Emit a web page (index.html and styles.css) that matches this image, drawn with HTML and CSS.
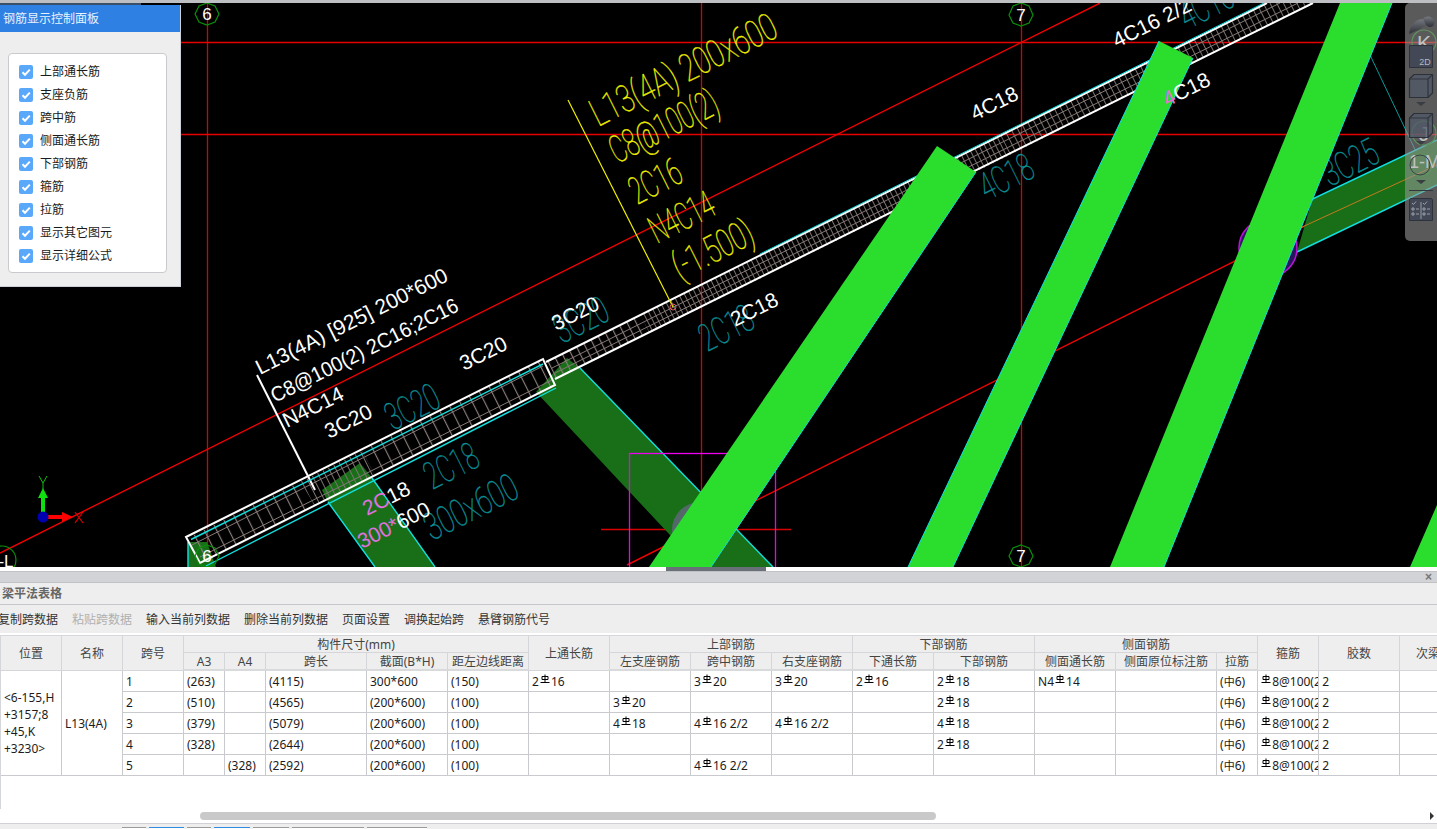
FILE: index.html
```html
<!DOCTYPE html>
<html lang="zh-CN">
<head>
<meta charset="utf-8">
<title>梁平法表格</title>
<link rel="stylesheet" href="styles.css">
</head>
<body>
<svg width="0" height="0" class="defs" aria-hidden="true">
  <defs>
    <symbol id="rb" viewBox="0 0 10 10">
      <path d="M5 0.5V8.5M2 2.5H8V5.5H2ZM0.5 8.5H9.5" fill="none" stroke="#000" stroke-width="1"/>
    </symbol>
  </defs>
</svg>
<div class="topbar"></div>
<main class="canvas">
  <svg class="cad" viewBox="0 3 1437 564" width="1437" height="564">
    <defs>
      <pattern id="p11" width="11" height="80" patternUnits="userSpaceOnUse" patternTransform="rotate(-26.57)"><path d="M.5 0V80" stroke="#8a7e7a" stroke-width="1.3"/></pattern>
      <pattern id="p8" width="8" height="80" patternUnits="userSpaceOnUse" patternTransform="rotate(-26.57)"><path d="M.5 0V80" stroke="#8a7e7a" stroke-width="1.3"/></pattern>
      <pattern id="p6" width="6" height="80" patternUnits="userSpaceOnUse" patternTransform="rotate(-26.57)"><path d="M.5 0V80" stroke="#7d7270" stroke-width="1"/></pattern>
      <pattern id="p5" width="5" height="80" patternUnits="userSpaceOnUse" patternTransform="rotate(-26.57)"><path d="M.5 0V80" stroke="#7d7270" stroke-width="1"/></pattern>
    </defs>

    <g class="red">
      <path d="M207.500 3V567M701.500 3V567M1021.500 3V567"/>
      <path class="redh" d="M181 42.500H1437M181 134.500H1437"/>
      <path class="redb" d="M0 553L1100 3M627 565L1437 160"/>
      <path d="M601 529.500H791"/>
    </g>

    <path class="cy" d="M1370 55L1420 160"/>

    <!-- dark members -->
    <g class="dk">
      <polygon points="188,542 207,542 216,567 188,567"/>
      <polygon points="322,490 360,463 372,478 435,567 375,567 328,502"/>
      <polygon points="536,392 567,358 580,368 773,567 700,567"/>
      <polygon points="1312,200 1437,140 1437,185 1297,252"/>
    </g>
    <path class="cyb" d="M188 567V542M328 502L375 567M372 478L435 567M580 368L773 567M1300 205L1437 140M1297 252L1437 185"/>
    <path class="or" d="M1300 228L1437 165"/>

    <rect class="mg" x="629.500" y="453.500" width="146" height="120"/>
    <circle class="gc" cx="700" cy="530" r="28"/>
    <circle class="mgc" cx="1268" cy="248" r="29"/>

    <!-- beam mesh -->
    <polygon fill="url(#p11)" points="188,538 300,482 315,505 205,561"/>
    <polygon fill="url(#p6)" points="300,482 362,451 375,476 315,505"/>
    <polygon fill="url(#p11)" points="362,451 543,359 555,385 375,476"/>
    <polygon fill="url(#p8)" points="546,362 640,315 650,333 555,378"/>
    <polygon fill="url(#p5)" points="640,315 1000,135 1010,155 650,333"/>
    <polygon fill="url(#p6)" points="1000,135 1267,3 1313,3 1010,155"/>
    <path class="mesh" d="M192 545L543 366M200 557L552 380M552 368L1280 3M555 373L1298 3"/>

    <g class="wl">
      <path d="M186 537L543 359L555 385L200 563Z"/>
      <path d="M546 362L1267 3M555 379L1313 3"/>
      <path d="M257 375L315 490"/>
    </g>
    <path class="cyb" d="M191 539.500L543 364M206 566L556 388"/>
    <path class="cyb thin" d="M760 254L1264 3"/>

    <!-- teal annotation -->
    <g class="tl">
      <text transform="translate(393 431) rotate(-26.57)" textLength="56" lengthAdjust="spacingAndGlyphs">3C20</text>
      <text transform="translate(432 490) rotate(-26.57)" textLength="56" lengthAdjust="spacingAndGlyphs">2C18</text>
      <text transform="translate(432 541) rotate(-26.57)" textLength="100" lengthAdjust="spacingAndGlyphs">300x600</text>
      <text transform="translate(562 344) rotate(-26.57)" textLength="56" lengthAdjust="spacingAndGlyphs">3C20</text>
      <text transform="translate(707 352) rotate(-26.57)" textLength="56" lengthAdjust="spacingAndGlyphs">2C18</text>
      <text transform="translate(987 201) rotate(-26.57)" textLength="56" lengthAdjust="spacingAndGlyphs">4C18</text>
      <text transform="translate(1187 30) rotate(-26.57)" textLength="56" lengthAdjust="spacingAndGlyphs">4C16</text>
      <text transform="translate(1330 187) rotate(-26.57)" textLength="58" lengthAdjust="spacingAndGlyphs">3C25</text>
    </g>

    <!-- yellow annotation -->
    <path class="yl" d="M568 100L673 307"/>
    <circle class="rd" cx="673" cy="307" r="3"/>
    <g class="yt">
      <text transform="translate(598 127) rotate(-26.57)" textLength="204" lengthAdjust="spacingAndGlyphs">L13(4A) 200x600</text>
      <text transform="translate(617 164) rotate(-26.57)" textLength="117" lengthAdjust="spacingAndGlyphs">C8@100(2)</text>
      <text transform="translate(637 205) rotate(-26.57)" textLength="54" lengthAdjust="spacingAndGlyphs">2C16</text>
      <text transform="translate(657 244) rotate(-26.57)" textLength="68" lengthAdjust="spacingAndGlyphs">N4C14</text>
      <text transform="translate(680 280) rotate(-26.57)" textLength="86" lengthAdjust="spacingAndGlyphs">(-1.500)</text>
    </g>

    <!-- bright members -->
    <g class="gr">
      <polygon points="937,146 976,172 711,567 649,567"/>
      <polygon points="1159,41 1193,58 953,567 908,567"/>
      <polygon points="1340,3 1392,3 1164,567 1110,567"/>
      <polygon points="1437,505 1437,567 1410,567"/>
    </g>
    <path class="cyb thin" d="M976 172L711 567M1159 41L908 567M1193 58L953 567M1392 3L1164 567"/>

    <!-- white annotation -->
    <g class="wt">
      <text transform="translate(260 375) rotate(-26.57)" textLength="212" lengthAdjust="spacingAndGlyphs">L13(4A) [925] 200*600</text>
      <text transform="translate(275 403) rotate(-26.57)" textLength="207" lengthAdjust="spacingAndGlyphs">C8@100(2) 2C16;2C16</text>
      <text transform="translate(287 428) rotate(-26.57)">N4C14</text>
      <text transform="translate(329 439) rotate(-26.57)">3C20</text>
      <text transform="translate(464 371) rotate(-26.57)">3C20</text>
      <text transform="translate(556 331) rotate(-26.57)">3C20</text>
      <text transform="translate(735 327) rotate(-26.57)">2C18</text>
      <text transform="translate(975 121) rotate(-26.57)">4C18</text>
      <text transform="translate(1117 48) rotate(-26.57)">4C16 2/2</text>
      <text transform="translate(1167 107) rotate(-26.57)"><tspan class="pk">4</tspan>C18</text>
      <text transform="translate(367 516) rotate(-26.57)"><tspan class="pk">2C</tspan>18</text>
      <text transform="translate(362 549) rotate(-26.57)"><tspan class="pk">300*</tspan>600</text>
    </g>

    <!-- grid bubbles -->
    <g class="bub">
      <polygon points="207,3 215,6 219,14 215,22 207,25 199,22 195,14 199,6"/>
      <polygon points="1021,3 1029,6 1033,15 1029,23 1021,26 1013,23 1009,15 1013,6"/>
      <polygon points="207,545 215,548 219,556 215,564 207,567 199,564 195,556 199,548"/>
      <polygon points="1021,545 1029,548 1033,556 1029,564 1021,567 1013,564 1009,556 1013,548"/>
      <circle cx="2" cy="560" r="14"/>
      <circle cx="1424" cy="42" r="12"/>
      <circle cx="1424" cy="133" r="12"/>
      <circle cx="1421" cy="165" r="11"/>
    </g>
    <g class="lb">
      <text x="207" y="20">6</text>
      <text x="1021" y="21">7</text>
      <text x="207" y="562">6</text>
      <text x="1021" y="562">7</text>
      <text x="6" y="567">-L</text>
      <text class="big" x="1424" y="50">K</text>
      <text class="big" x="1424" y="141">J</text>
      <text class="mid" x="1409" y="168">1-M</text>
    </g>

    <!-- axis -->
    <g class="axis">
      <path class="ag" d="M41 513V498H38L43 488L48 498H45V513Z"/>
      <path class="ar" d="M48 515H62V512L73 517L62 522V519H48Z"/>
      <circle class="ab" cx="43" cy="517" r="5.500"/>
      <path class="ayt" d="M39 476L43 483L47 476M43 483V489"/>
      <path class="axt" d="M75 512L83 523M83 512L75 523"/>
    </g>
  </svg>

  <span class="edge"></span>
  <section class="rebar-panel">
    <h2 class="rebar-title">钢筋显示控制面板</h2>
    <div class="rebar-body">
      <ul class="rebar-list">
        <li><span class="cb"><svg viewBox="0 0 14 14"><path d="M3.500 7.200L6 9.700L10.800 4.600"/></svg></span>上部通长筋</li>
        <li><span class="cb"><svg viewBox="0 0 14 14"><path d="M3.500 7.200L6 9.700L10.800 4.600"/></svg></span>支座负筋</li>
        <li><span class="cb"><svg viewBox="0 0 14 14"><path d="M3.500 7.200L6 9.700L10.800 4.600"/></svg></span>跨中筋</li>
        <li><span class="cb"><svg viewBox="0 0 14 14"><path d="M3.500 7.200L6 9.700L10.800 4.600"/></svg></span>侧面通长筋</li>
        <li><span class="cb"><svg viewBox="0 0 14 14"><path d="M3.500 7.200L6 9.700L10.800 4.600"/></svg></span>下部钢筋</li>
        <li><span class="cb"><svg viewBox="0 0 14 14"><path d="M3.500 7.200L6 9.700L10.800 4.600"/></svg></span>箍筋</li>
        <li><span class="cb"><svg viewBox="0 0 14 14"><path d="M3.500 7.200L6 9.700L10.800 4.600"/></svg></span>拉筋</li>
        <li><span class="cb"><svg viewBox="0 0 14 14"><path d="M3.500 7.200L6 9.700L10.800 4.600"/></svg></span>显示其它图元</li>
        <li><span class="cb"><svg viewBox="0 0 14 14"><path d="M3.500 7.200L6 9.700L10.800 4.600"/></svg></span>显示详细公式</li>
      </ul>
    </div>
  </section>

  <aside class="tools">
    <svg viewBox="0 0 32 238" width="32" height="238">
      <defs>
        <linearGradient id="dm" x1="0" y1="0" x2="0" y2="1"><stop offset="0" stop-color="#74777e"/><stop offset="1" stop-color="#2e3037"/></linearGradient>
      </defs>
      <path class="t-dome" d="M4 31C5 22 11 16 18 16C20 16 22 17 24 19C20 24 12 28 4 31Z"/>
      <path class="t-dome" d="M18 16C20 13 24 13 27 15C30 17 30 21 28 23C26 25 23 24 21 22C20 20 19 18 18 16Z"/>
      <path class="t-face" d="M4.500 42.500H27.500V64.500H4.500Z"/>
      <text class="t-2d" x="20" y="62">2D</text>
      <path class="t-cube" d="M4.500 76L9 71.500H27.500V90L23 94.500H4.500Z"/>
      <path class="t-line" d="M4.500 76H23V94.500M23 76L27.500 71.500"/>
      <path class="t-tri" d="M11 99H21L16 103Z"/>
      <path class="t-cube" d="M4.500 115L9 110.500H27.500V130L23 134.500H4.500Z"/>
      <path class="t-line" d="M4.500 115H23V134.500M23 115L27.500 110.500"/>
      <path class="t-tri" d="M11 138H21L16 142Z"/>
      <circle class="t-arc" cx="15" cy="162" r="10"/>
      <path class="t-tri" d="M11 177H21L16 181Z"/>
      <path class="t-sep" d="M4 187.500H28"/>
      <path class="t-face" d="M4.500 197C4.500 196 5.500 195.500 7 195.500H25C26.500 195.500 27.500 196 27.500 197V217.500H4.500Z"/>
      <path class="t-lite" d="M16 199V216M7 200L8.500 201.500L11 198.500M18 200L19.500 201.500L22 198.500M7 205H9V207H7ZM11 206H14M7 210H9V212H7ZM11 211H14M18 205H20V207H18ZM22 206H25M18 210H20V212H18ZM22 211H25"/>
    </svg>
  </aside>
</main>

<div class="splitter"><span class="handle"></span></div>

<section class="beam-panel">
  <div class="bar"><span class="close">×</span></div>
  <h1 class="beam-title">梁平法表格</h1>
  <nav class="toolbar">
    <span>复制跨数据</span>
    <span class="off">粘贴跨数据</span>
    <span>输入当前列数据</span>
    <span>删除当前列数据</span>
    <span>页面设置</span>
    <span>调换起始跨</span>
    <span>悬臂钢筋代号</span>
  </nav>
  <div class="grid-wrap">
    <table class="grid">
      <colgroup>
        <col class="c61"><col class="c61"><col class="c61"><col class="c41"><col class="c41"><col class="c101"><col class="c81"><col class="c81"><col class="c81"><col class="c81"><col class="c81"><col class="c81"><col class="c81"><col class="c101"><col class="c81"><col class="c101"><col class="c41"><col class="c61"><col class="c81"><col class="c81">
      </colgroup>
      <thead>
        <tr class="h1">
          <th rowspan="2">位置</th><th rowspan="2">名称</th><th rowspan="2">跨号</th>
          <th colspan="5">构件尺寸(mm)</th>
          <th rowspan="2">上通长筋</th>
          <th colspan="3">上部钢筋</th>
          <th colspan="2">下部钢筋</th>
          <th colspan="3">侧面钢筋</th>
          <th rowspan="2">箍筋</th><th rowspan="2">胶数</th><th rowspan="2">次梁宽度</th>
        </tr>
        <tr class="h2">
          <th>A3</th><th>A4</th><th>跨长</th><th>截面(B*H)</th><th>距左边线距离</th>
          <th>左支座钢筋</th><th>跨中钢筋</th><th>右支座钢筋</th>
          <th>下通长筋</th><th>下部钢筋</th>
          <th>侧面通长筋</th><th>侧面原位标注筋</th><th>拉筋</th>
        </tr>
      </thead>
      <tbody>
        <tr>
          <td rowspan="5" class="pos">&lt;6-155,H<br>+3157;8<br>+45,K<br>+3230&gt;</td>
          <td rowspan="5">L13(4A)</td>
          <td>1</td><td>(263)</td><td></td><td>(4115)</td><td>300*600</td><td>(150)</td>
          <td>2<svg class="rb"><use href="#rb"/></svg>16</td><td></td><td>3<svg class="rb"><use href="#rb"/></svg>20</td><td>3<svg class="rb"><use href="#rb"/></svg>20</td>
          <td>2<svg class="rb"><use href="#rb"/></svg>16</td><td>2<svg class="rb"><use href="#rb"/></svg>18</td>
          <td>N4<svg class="rb"><use href="#rb"/></svg>14</td><td></td><td>(<span class="phi">中</span>6)</td>
          <td class="st"><svg class="rb"><use href="#rb"/></svg>8@100(2)</td><td>2</td><td></td>
        </tr>
        <tr>
          <td>2</td><td>(510)</td><td></td><td>(4565)</td><td>(200*600)</td><td>(100)</td>
          <td></td><td>3<svg class="rb"><use href="#rb"/></svg>20</td><td></td><td></td>
          <td></td><td>2<svg class="rb"><use href="#rb"/></svg>18</td>
          <td></td><td></td><td>(<span class="phi">中</span>6)</td>
          <td class="st"><svg class="rb"><use href="#rb"/></svg>8@100(2)</td><td>2</td><td></td>
        </tr>
        <tr>
          <td>3</td><td>(379)</td><td></td><td>(5079)</td><td>(200*600)</td><td>(100)</td>
          <td></td><td>4<svg class="rb"><use href="#rb"/></svg>18</td><td>4<svg class="rb"><use href="#rb"/></svg>16 2/2</td><td>4<svg class="rb"><use href="#rb"/></svg>16 2/2</td>
          <td></td><td>4<svg class="rb"><use href="#rb"/></svg>18</td>
          <td></td><td></td><td>(<span class="phi">中</span>6)</td>
          <td class="st"><svg class="rb"><use href="#rb"/></svg>8@100(2)</td><td>2</td><td></td>
        </tr>
        <tr>
          <td>4</td><td>(328)</td><td></td><td>(2644)</td><td>(200*600)</td><td>(100)</td>
          <td></td><td></td><td></td><td></td>
          <td></td><td>2<svg class="rb"><use href="#rb"/></svg>18</td>
          <td></td><td></td><td>(<span class="phi">中</span>6)</td>
          <td class="st"><svg class="rb"><use href="#rb"/></svg>8@100(2)</td><td>2</td><td></td>
        </tr>
        <tr>
          <td>5</td><td></td><td>(328)</td><td>(2592)</td><td>(200*600)</td><td>(100)</td>
          <td></td><td></td><td>4<svg class="rb"><use href="#rb"/></svg>16 2/2</td><td></td>
          <td></td><td></td>
          <td></td><td></td><td>(<span class="phi">中</span>6)</td>
          <td class="st"><svg class="rb"><use href="#rb"/></svg>8@100(2)</td><td>2</td><td></td>
        </tr>
      </tbody>
    </table>
  </div>
  <div class="hscroll"><span class="thumb"></span><span class="arrow"></span></div>
  <div class="status">
    <span class="tab t24"></span><span class="tab t35 act"></span><span class="tab t24"></span><span class="tab t36 act"></span><span class="tab t36"></span><span class="tab t72"></span><span class="tab t60"></span>
  </div>
</section>
</body>
</html>
```
FILE: styles.css
```css
html, body { margin: 0; padding: 0; }
body {
  width: 1437px;
  height: 829px;
  overflow: hidden;
  background: #fff;
  font-family: "Noto Sans", "Noto Sans CJK SC", sans-serif;
  font-size: 12px;
  color: #222;
}
.defs { position: absolute; }
.topbar { height: 3px; background: #bdbfc3; }

.canvas { position: relative; height: 564px; background: #000; overflow: hidden; }
.cad { display: block; }
.cad text { font-family: "Liberation Sans", sans-serif; }

.red path { fill: none; stroke: #d80000; stroke-width: 1.3; }
.red path.redh { stroke: #e60000; }
.red path.redb { stroke: #f00000; stroke-width: 1.4; }
.cy { fill: none; stroke: #0a9a9a; stroke-width: 1; }
.dk polygon { fill: #186f18; }
.cyb { fill: none; stroke: #12e0e0; stroke-width: 1.4; }
.cyb.thin { stroke-width: 1; }
.or { fill: none; stroke: #c47a1e; stroke-width: 1; }
.mg { fill: none; stroke: #f000f0; stroke-width: 1.3; }
.gc { fill: #54686a; }
.mgc { fill: #2a1460; stroke: #c010e0; stroke-width: 1.5; }
.mesh { fill: none; stroke: #857a76; stroke-width: 1; }
.wl path { fill: none; stroke: #fff; stroke-width: 2; }
.cad .tl text { fill: #0a8f96; stroke: #0a8f96; stroke-width: 0.4; font-size: 38px; font-family: "Roboto", sans-serif; font-weight: 100; }
.cad .yt text { fill: #eeee00; stroke: #eeee00; stroke-width: 0.4; font-size: 38px; font-family: "Roboto", sans-serif; font-weight: 100; }
.yl { fill: none; stroke: #f0f000; stroke-width: 1.2; }
.rd { fill: none; stroke: #e06060; stroke-width: 1; }
.gr polygon { fill: #2bdd2d; }
.wt text { fill: #fff; font-size: 21px; }
.wt .pk { fill: #e070e0; }
.bub polygon, .bub circle { fill: none; stroke: #0a900a; stroke-width: 1.2; }
.lb text { fill: #fff; font-size: 17px; text-anchor: middle; }
.lb text.big { font-size: 21px; }
.lb text.mid { font-size: 18px; text-anchor: start; }
.ag { fill: #0fe00f; }
.ar { fill: #f00; }
.ab { fill: #0000b0; }
.ayt { fill: none; stroke: #0fc00f; stroke-width: 1; }
.axt { fill: none; stroke: #e00000; stroke-width: 1.2; }

.edge { position: absolute; left: 0; top: 0; width: 141px; height: 2px; background: #3a5068; }
.rebar-panel {
  position: absolute;
  left: 0; top: 2px;
  width: 180px;
  height: 281px;
  background: #eeeeee;
  border-right: 1px solid #ccd0d8;
  border-bottom: 1px solid #ccd0d8;
  display: flex;
  flex-direction: column;
}
.rebar-title {
  margin: 0;
  height: 27px;
  line-height: 27px;
  padding-left: 3px;
  background: #2f80e3;
  color: #e8f2ff;
  font-size: 12px;
  font-weight: 400;
}
.rebar-body { padding: 21px 13px 0 8px; }
.rebar-list {
  list-style: none;
  margin: 0;
  padding: 6px 0 0 10px;
  height: 220px;
  box-sizing: border-box;
  background: #fff;
  border: 1px solid #c9cacd;
  border-radius: 4px;
  color: #1a1a1a;
}
.rebar-list li { display: flex; align-items: center; height: 23px; gap: 7px; line-height: 16px; }
.cb { width: 14px; height: 14px; border-radius: 2px; background: #5aa8fa; display: block; }
.cb svg { display: block; width: 14px; height: 14px; }
.cb path { fill: none; stroke: #fff; stroke-width: 2; }

.tools {
  position: absolute;
  left: 1405px; top: 0;
  width: 32px;
  height: 238px;
  background: rgba(150, 150, 150, 0.6);
  border-radius: 5px 0 0 5px;
}
.tools svg { display: block; }
.t-dome { fill: url(#dm); }
.t-face { fill: #434856; stroke: #2e323c; stroke-width: 1; }
.t-cube { fill: rgba(80, 90, 105, 0.75); stroke: #2c3038; stroke-width: 1.2; }
.t-2d { fill: #b4b8c0; font-family: "Liberation Sans", sans-serif; font-size: 9px; text-anchor: middle; }
.t-line { fill: none; stroke: #30343e; stroke-width: 1.2; }
.t-arc { fill: none; stroke: #3d414b; stroke-width: 1; }
.t-tri { fill: #3a3d44; }
.t-sep { fill: none; stroke: #33363e; stroke-width: 1; }
.t-lite { fill: none; stroke: #9aa0a8; stroke-width: 1; }

.splitter { position: relative; height: 4px; background: #fff; }
.handle { position: absolute; left: 666px; top: 0; width: 100px; height: 4px; background: #6a7078; }

.beam-panel { display: flex; flex-direction: column; height: 258px; }
.bar {
  height: 10px;
  background: #d1d3d7;
  border-top: 1px solid #c0c2c6;
  border-bottom: 1px solid #c0c2c6;
  display: flex;
  justify-content: flex-end;
}
.close { color: #777; font-size: 12px; line-height: 11px; padding-right: 5px; font-family: "Liberation Sans", sans-serif; font-weight: 700; }
.beam-title {
  margin: 0;
  height: 21px;
  line-height: 21px;
  padding-left: 2px;
  background: #eeeeee;
  border-bottom: 1px solid #c4c6c9;
  color: #666;
  font-size: 12px;
  font-weight: 700;
}
.toolbar {
  height: 28px;
  margin-left: -2px;
  background: #eeeeee;
  display: flex;
  align-items: center;
  gap: 14px;
  color: #333;
  white-space: nowrap;
}
.toolbar .off { color: #b0b0b0; }

.grid-wrap {
  margin-top: 2px;
  height: 174px;
  overflow: hidden;
  border-left: 1px solid #d4d6d9;
  box-sizing: border-box;
}
.grid { border-collapse: separate; border-spacing: 0; table-layout: fixed; width: 1479px; }
.c41 { width: 41px; }
.c61 { width: 61px; }
.c81 { width: 81px; }
.c101 { width: 101px; }
.grid th {
  background: #eeeeee;
  font-weight: 400;
  color: #444;
  padding: 0;
  border-right: 1px solid #d4d6d9;
  border-bottom: 1px solid #d4d6d9;
  white-space: nowrap;
  overflow: hidden;
  line-height: 15px;
}
.h1 th { height: 14px; padding-top: 1px; border-top: 1px solid #d4d6d9; }
.h2 th { height: 16px; border-bottom: 2px solid #d8dadc; }
.grid td {
  height: 20px;
  padding: 0 0 0 3px;
  border-right: 1px solid #c8cacd;
  border-bottom: 1px solid #c8cacd;
  white-space: nowrap;
  overflow: hidden;
  line-height: 17px;
  color: #1c1c1c;
  background: #fff;
}
.rb { width: 10px; height: 10px; margin: 0 1px; vertical-align: 2px; }
.st .rb { margin-left: 0; }
.phi { font-size: 11px; font-family: "Noto Sans CJK SC", sans-serif; }

.hscroll {
  height: 14px;
  display: flex;
  align-items: center;
  background: #fff;
}
.thumb { display: block; margin-left: 200px; width: 736px; height: 8px; background: #c9c9c9; border-radius: 4px; }
.arrow {
  display: block;
  margin-left: auto;
  margin-right: 3px;
  border-left: 4px solid #333;
  border-top: 4px solid transparent;
  border-bottom: 4px solid transparent;
}
.status {
  height: 5px;
  border-top: 1px solid #cfd1d4;
  background: #eeeeee;
  display: flex;
  align-items: flex-end;
  padding-left: 122px;
  gap: 3px;
}
.tab { display: block; height: 2px; background: #fff; border-top: 1px solid #9a9a9a; box-sizing: border-box; }
.tab.act { border-top-color: #2e8de0; }
.t24 { width: 24px; }
.t35 { width: 35px; }
.t36 { width: 36px; }
.t60 { width: 60px; }
.t72 { width: 72px; }
```
